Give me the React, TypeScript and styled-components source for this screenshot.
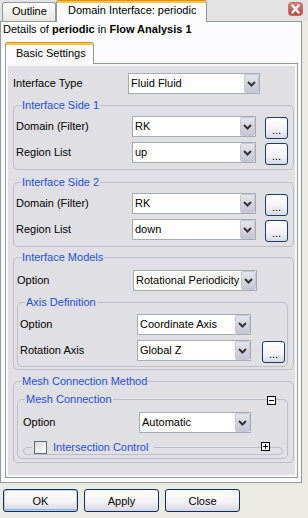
import React from "react";
import styled, { createGlobalStyle } from "styled-components";

const GlobalStyle = createGlobalStyle`
  html, body {
    margin: 0;
    padding: 0;
  }
  body {
    width: 308px;
    height: 518px;
    overflow: hidden;
    background: #ebeae3;
    font-family: "Liberation Sans", Arial, sans-serif;
    font-size: 11px;
    color: #000;
  }
  * {
    box-sizing: border-box;
  }
`;

const TabStrip = styled.div`
  display: flex;
  align-items: flex-end;
  height: 21px;
  padding-left: 2px;
  background: #e3e3e3;
`;

const ViewTab = styled.div<{ $active?: boolean }>`
  position: relative;
  z-index: 1;
  width: ${(p) => (p.$active ? 151 : 54)}px;
  height: ${(p) => (p.$active ? 22 : 19)}px;
  margin-bottom: ${(p) => (p.$active ? -1 : 0)}px;
  padding: ${(p) => (p.$active ? "3px 0 0 11px" : "1px 0 0 9px")};
  border: 1px solid #919b9c;
  border-bottom: none;
  border-top: ${(p) => (p.$active ? "none" : "1px solid #919b9c")};
  border-radius: 3px 3px 0 0;
  background: ${(p) =>
    p.$active
      ? "linear-gradient(#e68b2c 0 1px, #ffc73c 1px 3px, #fcfcfe 3px)"
      : "linear-gradient(#fdfdfd, #e6e5e0)"};
  line-height: 14px;
  white-space: nowrap;
`;

const CloseButton = styled.span`
  align-self: flex-start;
  display: flex;
  margin: 2px 5px 0 auto;
`;

const Pane = styled.div`
  width: 302px;
  border: 1px solid #919b9c;
  background: #fcfcfe;
  padding: 0 0 4px 1px;
`;

const Heading = styled.div`
  padding: 1px 0 0 1px;
  margin-bottom: 6px;
  line-height: 13px;
  white-space: nowrap;
`;

const Strong = styled.b`
  font-weight: bold;
`;

const PageTabs = styled.div`
  display: flex;
  height: 21px;
  margin-left: 3px;
`;

const PageTab = styled.div`
  position: relative;
  z-index: 1;
  width: 89px;
  height: 22px;
  padding: 4px 0 0 10px;
  border: 1px solid #919b9c;
  border-top: none;
  border-bottom: none;
  border-radius: 3px 3px 0 0;
  background: linear-gradient(#e68b2c 0 1px, #ffc73c 1px 3px, #fcfcfe 3px);
  line-height: 14px;
`;

const Page = styled.div`
  width: 293px;
  margin-left: 3px;
  padding: 9px 3px 14px 7px;
  border: 1px solid #919b9c;
  background: #e0dfe3;
  box-shadow: inset 0 0 0 2px #f8f8fa;
`;

const Row = styled.div`
  display: flex;
  align-items: flex-start;
  height: 22px;

  & + & {
    margin-top: 4px;
  }
`;

const Label = styled.span<{ $w: number }>`
  flex: none;
  width: ${(p) => p.$w}px;
  line-height: 21px;
  white-space: nowrap;
`;

const Combo = styled.div<{ $w: number }>`
  flex: none;
  display: flex;
  width: ${(p) => p.$w}px;
  height: 21px;
  border: 1px solid #a5acb5;
  background: #fff;
`;

const ComboText = styled.span`
  flex: 1;
  padding-left: 2px;
  line-height: 19px;
  white-space: nowrap;
  overflow: hidden;
`;

const DropButton = styled.span`
  display: flex;
  align-items: center;
  justify-content: center;
  width: 15px;
  border: 1px solid #c6c6d4;
  border-radius: 2px;
  background: linear-gradient(#e4e4ec, #c6c6d3);
`;

const Browse = styled.button<{ $ml: number }>`
  flex: none;
  display: flex;
  align-items: flex-end;
  justify-content: center;
  width: 23px;
  height: 22px;
  margin: 1px 0 0 ${(p) => p.$ml}px;
  padding: 0 0 2px;
  border: 1px solid #1c3d66;
  border-radius: 3px;
  background: linear-gradient(#ffffff, #f3f3f7 55%, #d9d9e4);
  font: inherit;
  line-height: 11px;
  color: #000;
`;

const Group = styled.fieldset<{ $mt: number }>`
  position: relative;
  min-width: 0;
  margin: ${(p) => p.$mt}px 0 0;
  padding: 0;
  border: 1px solid #bfbec6;
  border-radius: 5px;
`;

const Legend = styled.legend`
  margin-left: 7px;
  padding: 0 1px;
  line-height: 13px;
  color: #1f4fdc;
  white-space: nowrap;
`;

const CheckLegend = styled.legend`
  display: flex;
  align-items: center;
  gap: 6px;
  margin-left: 8px;
  padding: 0 6px 0 2px;
  line-height: 13px;
  color: #1f4fdc;
  white-space: nowrap;
`;

const Body = styled.div<{ $pad: string }>`
  padding: ${(p) => p.$pad};
`;

const Check = styled.span`
  width: 13px;
  height: 13px;
  border: 1px solid #5a6d84;
  background: linear-gradient(135deg, #d9d9d4, #ffffff);
`;

const Toggle = styled.span<{ $top: number; $right: number }>`
  position: absolute;
  top: ${(p) => p.$top}px;
  right: ${(p) => p.$right}px;
  display: flex;
`;

const ButtonBar = styled.div`
  display: flex;
  gap: 6px;
  padding: 6px 0 0 3px;
`;

const DialogButton = styled.button<{ $default?: boolean }>`
  width: 75px;
  height: 23px;
  padding: 0;
  border: 1px solid #0e2f5c;
  border-radius: 3px;
  background: linear-gradient(#ffffff, #f3f3f7 55%, #d6d6e2);
  box-shadow: ${(p) =>
    p.$default ? "inset 0 0 0 1px #b9d3f5, inset 0 -2px 0 0 #8fb2e6" : "none"};
  font: inherit;
  color: #000;
`;

const Chevron = () => (
  <svg width="9" height="6" viewBox="0 0 9 6">
    <polyline points="1,1 4.5,4.5 8,1" fill="none" stroke="#333" strokeWidth="2" />
  </svg>
);

const CloseIcon = () => (
  <svg width="15" height="14" viewBox="0 0 15 14">
    <defs>
      <linearGradient id="cg" x1="0" y1="0" x2="0" y2="1">
        <stop offset="0" stopColor="#d9827b" />
        <stop offset="1" stopColor="#b8453f" />
      </linearGradient>
    </defs>
    <rect x="0.5" y="0.5" width="14" height="13" rx="3" fill="url(#cg)" stroke="#c96b65" />
    <path d="M4.5 3.5 L10.5 10.5 M10.5 3.5 L4.5 10.5" stroke="#fff" strokeWidth="2.4" strokeLinecap="round" />
  </svg>
);

const ToggleIcon = ({ plus }: { plus?: boolean }) => (
  <svg width="9" height="9" viewBox="0 0 9 9">
    <rect x="0.5" y="0.5" width="8" height="8" fill="#fff" stroke="#000" />
    <line x1="2" y1="4.5" x2="7" y2="4.5" stroke="#000" />
    {plus && <line x1="4.5" y1="2" x2="4.5" y2="7" stroke="#000" />}
  </svg>
);

const Select = ({ value, w }: { value: string; w: number }) => (
  <Combo $w={w}>
    <ComboText>{value}</ComboText>
    <DropButton>
      <Chevron />
    </DropButton>
  </Combo>
);

const App: React.FC = () => {
  return (
    <>
      <GlobalStyle />
      <TabStrip>
        <ViewTab>Outline</ViewTab>
        <ViewTab $active>Domain Interface: periodic</ViewTab>
        <CloseButton>
          <CloseIcon />
        </CloseButton>
      </TabStrip>

      <Pane>
        <Heading>
          Details of <Strong>periodic</Strong> in <Strong>Flow Analysis 1</Strong>
        </Heading>
        <PageTabs>
          <PageTab>Basic Settings</PageTab>
        </PageTabs>

        <Page>
          <Row>
            <Label $w={115}>Interface Type</Label>
            <Select value="Fluid Fluid" w={132} />
          </Row>

          <Group $mt={4}>
            <Legend>Interface Side 1</Legend>
            <Body $pad="4px 5px 5px 2px">
              <Row>
                <Label $w={116}>Domain (Filter)</Label>
                <Select value="RK" w={124} />
                <Browse $ml={9}>...</Browse>
              </Row>
              <Row>
                <Label $w={116}>Region List</Label>
                <Select value="up" w={124} />
                <Browse $ml={9}>...</Browse>
              </Row>
            </Body>
          </Group>

          <Group $mt={6}>
            <Legend>Interface Side 2</Legend>
            <Body $pad="4px 5px 5px 2px">
              <Row>
                <Label $w={116}>Domain (Filter)</Label>
                <Select value="RK" w={124} />
                <Browse $ml={9}>...</Browse>
              </Row>
              <Row>
                <Label $w={116}>Region List</Label>
                <Select value="down" w={124} />
                <Browse $ml={9}>...</Browse>
              </Row>
            </Body>
          </Group>

          <Group $mt={4}>
            <Legend>Interface Models</Legend>
            <Body $pad="6px 5px 2px 3px">
              <Row>
                <Label $w={116}>Option</Label>
                <Select value="Rotational Periodicity" w={124} />
              </Row>
              <Group $mt={4}>
                <Legend>Axis Definition</Legend>
                <Body $pad="5px 3px 4px 2px">
                  <Row>
                    <Label $w={117}>Option</Label>
                    <Select value="Coordinate Axis" w={114} />
                  </Row>
                  <Row>
                    <Label $w={117}>Rotation Axis</Label>
                    <Select value="Global Z" w={114} />
                    <Browse $ml={11}>...</Browse>
                  </Row>
                </Body>
              </Group>
            </Body>
          </Group>

          <Group $mt={5}>
            <Legend>Mesh Connection Method</Legend>
            <Body $pad="5px 5px 3px 3px">
              <Group $mt={0}>
                <Legend>Mesh Connection</Legend>
                <Toggle $top={-10} $right={11}>
                  <ToggleIcon />
                </Toggle>
                <Body $pad="6px 4px 3px 5px">
                  <Row>
                    <Label $w={116}>Option</Label>
                    <Select value="Automatic" w={112} />
                  </Row>
                  <Group $mt={7}>
                    <CheckLegend>
                      <Check />
                      Intersection Control
                    </CheckLegend>
                    <Toggle $top={-12} $right={12}>
                      <ToggleIcon plus />
                    </Toggle>
                  </Group>
                </Body>
              </Group>
            </Body>
          </Group>
        </Page>
      </Pane>

      <ButtonBar>
        <DialogButton $default>OK</DialogButton>
        <DialogButton>Apply</DialogButton>
        <DialogButton>Close</DialogButton>
      </ButtonBar>
    </>
  );
};

export default App;
